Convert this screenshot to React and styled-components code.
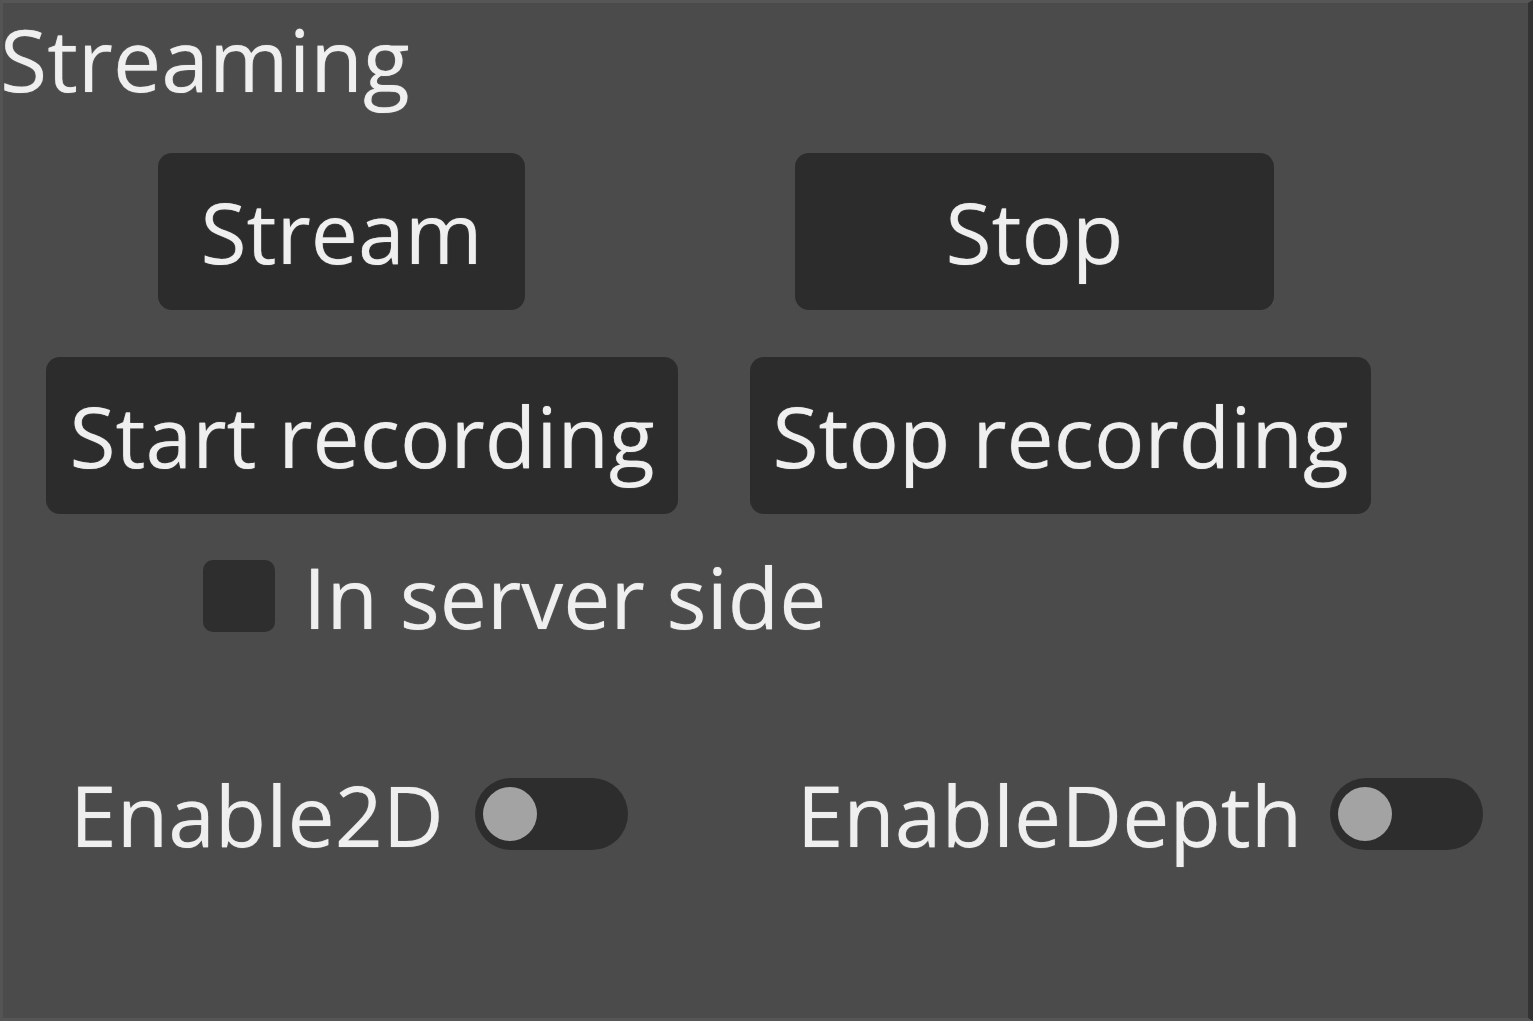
import React, { useState } from "react";
import styled, { createGlobalStyle } from "styled-components";

const GlobalStyle = createGlobalStyle`
  html, body {
    margin: 0;
    padding: 0;
    background: #4b4b4b;
  }
  * {
    box-sizing: border-box;
  }
`;

const Panel = styled.div`
  width: 1533px;
  height: 1021px;
  background: #4b4b4b;
  border-top: 3px solid #565656;
  border-bottom: 3px solid #565656;
  border-left: 3px solid #545454;
  border-right: 5px solid #333333;
  font-family: "Open Sans", "Noto Sans", sans-serif;
  font-weight: 500;
  color: #efefef;
  text-shadow: 0 0 1px rgba(239, 239, 239, 0.6);
  overflow: hidden;
`;

const Title = styled.div`
  font-size: 86px;
  line-height: 112px;
  height: 150px;
  margin-left: -3px;
`;

const Row = styled.div`
  display: flex;
  align-items: center;
  padding-left: ${props => props.indent}px;
  gap: ${props => props.gap}px;
  margin-bottom: ${props => props.after}px;
`;

const Button = styled.button`
  width: ${props => props.w}px;
  height: 157px;
  border: none;
  border-radius: 14px;
  background: #2c2c2c;
  color: inherit;
  text-shadow: inherit;
  font-family: inherit;
  font-weight: inherit;
  font-size: 84px;
  padding: 0;
  display: flex;
  align-items: center;
  justify-content: center;
  white-space: nowrap;
  cursor: pointer;
`;

const CheckRow = styled.label`
  display: flex;
  align-items: center;
  gap: 28px;
  padding-left: 200px;
  height: 76px;
  margin-top: 2px;
  margin-bottom: 142px;
  font-size: 84px;
  cursor: pointer;
`;

const Box = styled.span`
  width: 72px;
  height: 72px;
  border-radius: 10px;
  background: ${props => (props.checked ? "#5a7fb0" : "#2e2e2e")};
  flex-shrink: 0;
`;

const ToggleRow = styled.div`
  display: flex;
  align-items: center;
  height: 76px;
  padding-left: 67px;
`;

const ToggleItem = styled.div`
  display: flex;
  align-items: center;
  gap: ${props => props.gap}px;
  margin-right: ${props => props.after}px;
  font-size: 84px;
  white-space: nowrap;
`;

const Track = styled.button`
  width: 153px;
  height: 72px;
  border: none;
  border-radius: 36px;
  background: #2d2d2d;
  padding: 0 8px;
  display: flex;
  align-items: center;
  justify-content: ${props => (props.on ? "flex-end" : "flex-start")};
  cursor: pointer;
`;

const Knob = styled.span`
  width: 54px;
  height: 54px;
  border-radius: 50%;
  background: #a3a3a3;
`;

const Toggle = ({ label, gap, after }) => {
  const [on, setOn] = useState(false);
  return (
    <ToggleItem gap={gap} after={after}>
      {label}
      <Track on={on} onClick={() => setOn(!on)}>
        <Knob />
      </Track>
    </ToggleItem>
  );
};

export default function App() {
  const [serverSide, setServerSide] = useState(false);

  return (
    <>
      <GlobalStyle />
      <Panel>
        <Title>Streaming</Title>
        <Row indent={155} gap={270} after={47}>
          <Button w={367}>Stream</Button>
          <Button w={479}>Stop</Button>
        </Row>
        <Row indent={43} gap={72} after={44}>
          <Button w={632}>Start recording</Button>
          <Button w={621}>Stop recording</Button>
        </Row>
        <CheckRow onClick={() => setServerSide(!serverSide)}>
          <Box checked={serverSide} />
          In server side
        </CheckRow>
        <ToggleRow>
          <Toggle label="Enable2D" gap={31} after={169} />
          <Toggle label="EnableDepth" gap={28} after={0} />
        </ToggleRow>
      </Panel>
    </>
  );
}
